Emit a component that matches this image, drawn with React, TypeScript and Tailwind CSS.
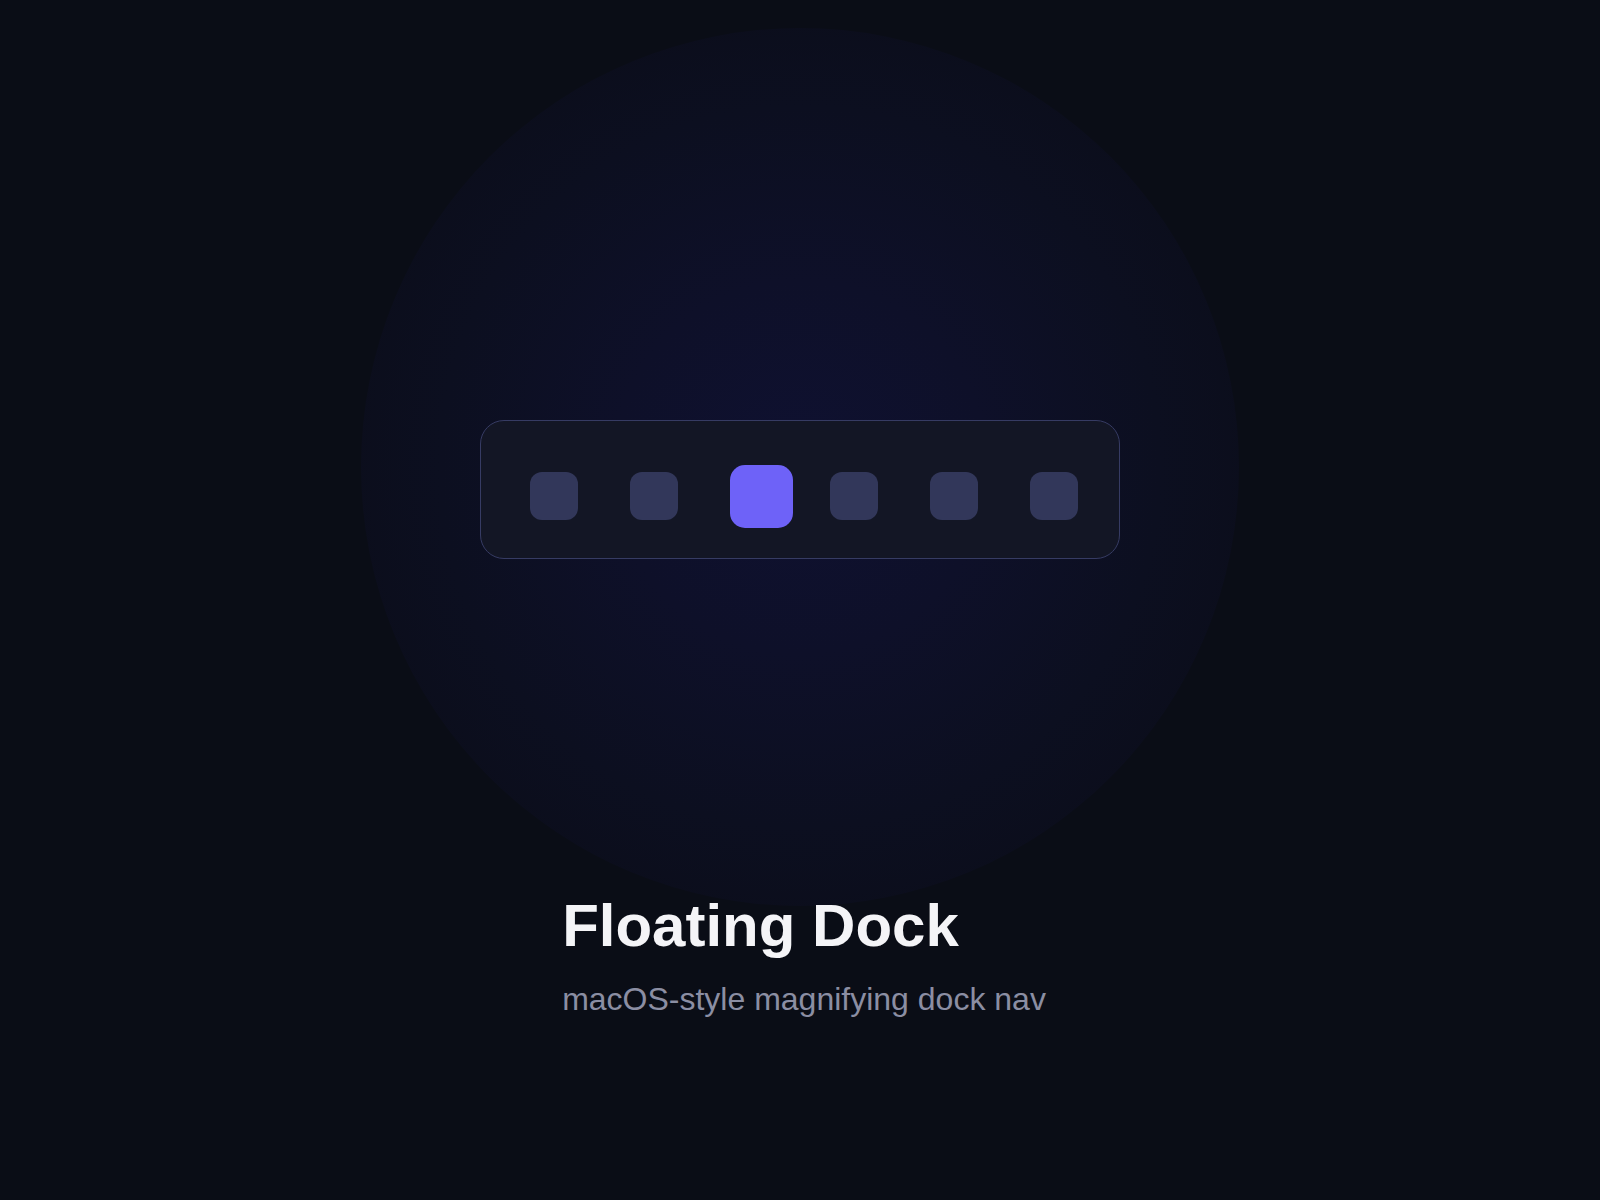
const items = ['Home', 'Search', 'Apps', 'Files', 'Mail', 'Settings'];
const activeIndex = 2;

function DockItem({ active }: { active: boolean }) {
  if (active) {
    return <div className="h-[63px] w-[63px] -mr-[15px] shrink-0 rounded-[15px] bg-[#6e62f8]" />;
  }
  return <div className="h-12 w-12 shrink-0 rounded-xl bg-[#32375a]" />;
}

export default function App() {
  return (
    <div className="relative min-h-screen overflow-hidden bg-[#0a0d16] font-['Liberation_Sans',Arial,sans-serif]">
      {/* soft glow behind the dock */}
      <div className="pointer-events-none absolute left-[361px] top-[28px] h-[878px] w-[878px] rounded-full bg-[radial-gradient(circle,#0f1131_0%,#0e1029_30%,#0c0f20_58%,#0b0d1a_80%,#0a0d17_100%)]" />

      <main className="relative flex flex-col items-center pt-[420px] pb-[200px]">
        <nav className="flex h-[139px] w-[640px] items-start rounded-3xl border border-[#363b63] bg-[#131625] pl-[49px] pt-[51px]">
          <div className="flex h-12 items-center gap-[52px]">
            {items.map((name, i) => (
              <DockItem key={name} active={i === activeIndex} />
            ))}
          </div>
        </nav>

        <div className="ml-2 mt-[337px] w-fit text-left">
          <h1 className="text-[60px] font-bold leading-[60px] text-[#f4f4f7]">Floating Dock</h1>
          <p className="mt-6 text-[32px] leading-[38px] text-[#8b8ea3]">macOS-style magnifying dock nav</p>
        </div>
      </main>
    </div>
  );
}
